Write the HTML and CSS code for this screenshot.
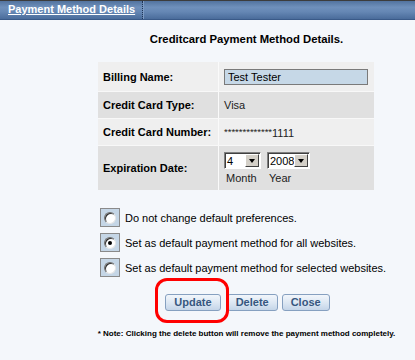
FILE: index.html
```html
<!DOCTYPE html>
<html lang="en">
  <head>
    <meta charset="UTF-8" />
    <title>Payment Method Details</title>
    <link rel="stylesheet" href="styles.css">
  </head>
  <body>
    <div class="topbar">
      <div class="tab"><a href="#">Payment Method Details</a></div>
    </div>
    <div class="content">
      <h1 class="title">Creditcard Payment Method Details.</h1>
      <table class="details">
        <tr class="light">
          <td class="label">Billing Name:</td>
          <td class="value"><input class="name-input" type="text" value="Test Tester" /></td>
        </tr>
        <tr class="dark">
          <td class="label">Credit Card Type:</td>
          <td class="value">Visa</td>
        </tr>
        <tr class="light">
          <td class="label">Credit Card Number:</td>
          <td class="value"><span class="stars">*************</span>1111</td>
        </tr>
        <tr class="dark expiry">
          <td class="label">Expiration Date:</td>
          <td class="value">
            <div class="expiry-grid">
              <span class="combo month"><span class="combo-text">4</span><span class="combo-btn"></span></span>
              <span class="combo year"><span class="combo-text">2008</span><span class="combo-btn"></span></span>
              <span class="sub">Month</span>
              <span class="sub">Year</span>
            </div>
          </td>
        </tr>
      </table>
      <ul class="choices">
        <li><span class="radio-box"><span class="radio"></span></span>Do not change default preferences.</li>
        <li><span class="radio-box"><span class="radio checked"></span></span>Set as default payment method for all websites.</li>
        <li><span class="radio-box"><span class="radio"></span></span>Set as default payment method for selected websites.</li>
      </ul>
      <div class="actions">
        <span class="highlight"><button class="btn">Update</button></span>
        <button class="btn delete">Delete</button>
        <button class="btn">Close</button>
      </div>
      <p class="note">* Note: Clicking the delete button will remove the payment method completely.</p>
    </div>
  </body>
</html>
```

FILE: styles.css
```css
body {
  margin: 0;
  background-color: #f4f7fb;
  font-family: "Liberation Sans", Arial, sans-serif;
  font-size: 11px;
  color: #000;
}
.topbar {
  height: 18px;
  border-top: 1px solid #3c3c3c;
  border-bottom: 1px solid #3a5a88;
  background: linear-gradient(#52739f, #6f90bb 35%, #6587b4 60%, #4a6c9b);
  display: flex;
}
.tab {
  width: 143px;
  border-right: 1px dotted #1f3556;
  box-shadow: 1px 0 0 #7e9cc4;
  padding-left: 8px;
  box-sizing: border-box;
  line-height: 17px;
}
.tab a {
  color: #fff;
  font-weight: bold;
  font-size: 11px;
}
.content {
  margin-left: 97px;
  width: 299px;
}
.title {
  font-size: 11.3px;
  line-height: 14px;
  text-align: center;
  margin: 12px 0 16px;
}
.details {
  margin-left: 1px;
  width: 276px;
  border-collapse: collapse;
}
.details td {
  padding: 0 5px;
  height: 26px;
  border-bottom: 1px solid #f8f8f8;
}
.details tr:first-child td {
  height: 29px;
}
.details .expiry td {
  height: 44px;
  border-bottom: none;
}
.details .label {
  width: 110px;
  font-weight: bold;
  border-right: 1px solid #fafafa;
}
.details .value {
  padding-left: 5px;
  color: #222;
}
.light td {
  background-color: #efefef;
}
.dark td {
  background-color: #e0e0e0;
}
.name-input {
  width: 144px;
  height: 16px;
  box-sizing: border-box;
  margin: 0;
  padding: 0 3px;
  border: 1px solid #7a7a7a;
  background-color: #c6d8e7;
  font-family: inherit;
  font-size: 11px;
  color: #000;
}
.stars {
  font-size: 9.5px;
  vertical-align: 2px;
}
.expiry-grid {
  display: grid;
  grid-template-columns: 37px 43px;
  column-gap: 6px;
  row-gap: 3px;
  margin-top: 1px;
}
.combo {
  display: flex;
  height: 17px;
  box-sizing: border-box;
  border: 1px solid;
  border-color: #808080 #fff #fff #808080;
  box-shadow: inset 1px 1px 0 #404040;
  background-color: #fff;
  padding: 1px 1px 1px 2px;
}
.combo-text {
  flex: 1;
  line-height: 14px;
  color: #000;
}
.combo-btn {
  width: 14px;
  background-color: #d4d0c8;
  box-sizing: border-box;
  border: 1px solid;
  border-color: #fff #404040 #404040 #fff;
  display: flex;
  align-items: center;
  justify-content: center;
}
.combo-btn::after {
  content: "";
  border-left: 3.5px solid transparent;
  border-right: 3.5px solid transparent;
  border-top: 4px solid #000;
}
.sub {
  font-size: 11px;
  line-height: 13px;
  color: #222;
  padding-left: 2px;
}
.choices {
  list-style: none;
  margin: 18px 0 0 3px;
  padding: 0;
  display: flex;
  flex-direction: column;
  gap: 6px;
}
.choices li {
  display: flex;
  align-items: center;
  gap: 5px;
  height: 19px;
}
.radio-box {
  width: 20px;
  height: 19px;
  box-sizing: border-box;
  border: 1px solid #8a8a8a;
  background-color: #c5d6e6;
  display: flex;
  align-items: center;
  justify-content: center;
}
.radio {
  width: 12px;
  height: 12px;
  box-sizing: border-box;
  border-radius: 50%;
  background-color: #fff;
  border: 1px solid;
  border-color: #6f6f6f #e6e6e6 #e6e6e6 #6f6f6f;
  box-shadow: inset 1px 1px 0 #303030;
  display: flex;
  align-items: center;
  justify-content: center;
}
.radio.checked::after {
  content: "";
  width: 4px;
  height: 4px;
  border-radius: 50%;
  background-color: #000;
}
.actions {
  display: flex;
  justify-content: center;
  gap: 4px;
  margin-top: 17px;
  padding-left: 2px;
}
.highlight {
  position: relative;
  display: flex;
  margin-right: 2px;
}
.highlight::after {
  content: "";
  position: absolute;
  left: -10px;
  top: -16px;
  width: 74px;
  height: 45px;
  box-sizing: border-box;
  border: 3px solid #f00;
  border-radius: 12px;
}
.btn {
  height: 17px;
  padding: 0 8px;
  margin: 0;
  border: 1px solid #86a0c0;
  border-radius: 3px;
  background: linear-gradient(#f2f6fb, #dbe6f2 55%, #c4d5e8);
  font-family: inherit;
  font-size: 11px;
  font-weight: bold;
  color: #36577f;
  line-height: 15px;
}
.note {
  font-size: 8px;
  font-weight: bold;
  line-height: 10px;
  text-align: center;
  margin: 18px 0 0;
}
```
